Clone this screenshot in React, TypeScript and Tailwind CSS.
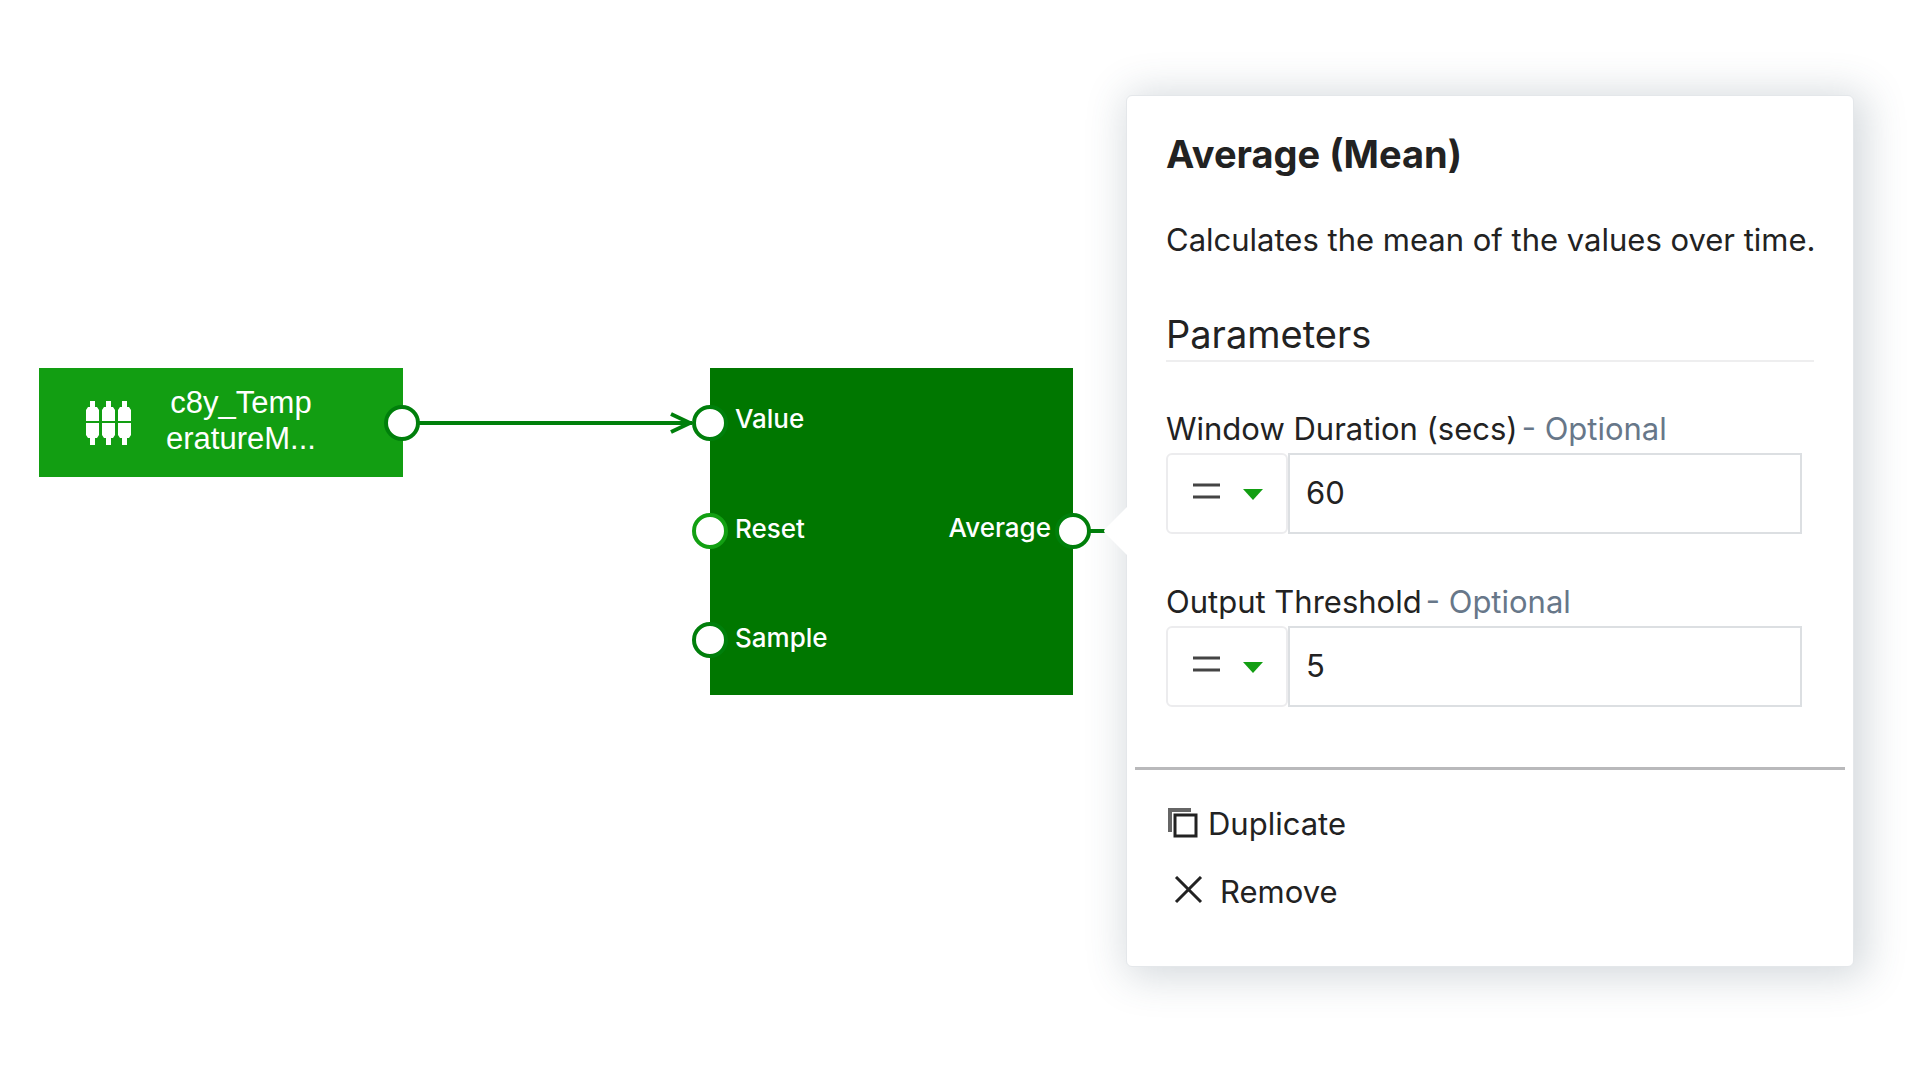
import React from 'react';

interface PortProps {
  className: string;
}

interface ParameterFieldProps {
  id: string;
  label: string;
  value: string;
}

const Port: React.FC<PortProps> = ({ className }) => (
  <span className={`absolute h-9 w-9 rounded-full border-4 bg-white ${className}`} />
);

const SensorIcon = () => (
  <svg className="h-12 w-12 shrink-0" viewBox="0 0 48 48" fill="white" aria-hidden="true">
    {[1, 17, 33].map((x) => (
      <g key={x}>
        <path d={`M${x + 4} 2h5v6h2l2 3v11H${x}V11l2-3h2z`} />
        <path d={`M${x} 24h13v12l-2 3h-2v7h-5v-7h-2l-2-3z`} />
      </g>
    ))}
  </svg>
);

const SourceNode = () => (
  <div className="absolute left-[39px] top-[368px] flex h-[109px] w-[364px] items-center bg-[#129e12] pl-[46px] text-white">
    <SensorIcon />
    <p className="ml-5 w-[176px] pb-1 text-center font-['Liberation_Sans',sans-serif] text-[31px] leading-9">
      c8y_Temp
      <br />
      eratureM...
    </p>
    <Port className="-right-[17px] top-[37px] border-[#007f0b]" />
  </div>
);

const AverageNode = () => (
  <div className="absolute left-[710px] top-[368px] flex h-[327px] w-[363px] items-center justify-between bg-[#007700] pl-[25px] pr-[22px] text-[26px] font-medium leading-8 text-white">
    <ul className="flex h-full flex-col justify-between pb-[41px] pt-[35px]">
      <li>Value</li>
      <li>Reset</li>
      <li>Sample</li>
    </ul>
    <span className="pb-2">Average</span>
    <Port className="-left-[18px] top-[37px] border-[#007f0b]" />
    <Port className="-left-[18px] top-[145px] border-[#12a012]" />
    <Port className="-left-[18px] top-[254px] border-[#007f0b]" />
    <Port className="-right-[18px] top-[145px] border-[#007f0b]" />
  </div>
);

const ParameterField: React.FC<ParameterFieldProps> = ({ id, label, value }) => (
  <div>
    <label htmlFor={id} className="block whitespace-nowrap text-[31px] leading-10">
      {label}
      <span className="ml-1 text-[#677789]">- Optional</span>
    </label>
    <div className="mt-1 flex h-[81px] pr-3">
      <div className="relative w-[122px] shrink-0">
        <select
          aria-label={`${label} operator`}
          className="h-full w-full appearance-none rounded-md border-2 border-[#ececee] bg-white text-transparent"
        >
          <option>=</option>
        </select>
        <svg className="pointer-events-none absolute inset-0 h-full w-full" viewBox="0 0 122 81" aria-hidden="true">
          <path d="M27 32h27M27 44h27" stroke="#444" strokeWidth="3" />
          <path d="M77 36h20L87 47z" fill="#129e12" />
        </svg>
      </div>
      <input id={id} type="text" defaultValue={value} className="min-w-0 flex-1 border-2 border-[#dcdfe2] px-4 text-[31px]" />
    </div>
  </div>
);

const BlockPopover = () => (
  <section className="absolute left-[1126px] top-[95px] w-[728px] rounded-md border border-[#e4e7ea] bg-white px-2 pb-[50px] pt-8 shadow-[6px_4px_40px_6px_rgba(60,80,100,0.22)]">
    {/* Arrow towards the output port */}
    <svg className="absolute -left-6 top-[411px] h-12 w-6" viewBox="0 0 24 48" aria-hidden="true">
      <path d="M24 0L2 22q-2 2 0 4L24 48z" fill="white" />
    </svg>
    <div className="px-[31px]">
      <h1 className="text-[38px] font-bold leading-[52px]">Average (Mean)</h1>
      <p className="mt-[34px] whitespace-nowrap text-[31px] leading-[52px]">Calculates the mean of the values over time.</p>
      <h2 className="mt-[34px] border-b-2 border-[#eeeeef] pt-2 text-[38px] leading-[52px]">Parameters</h2>
      <div className="mt-[47px] flex flex-col gap-12">
        <ParameterField id="window-duration" label="Window Duration (secs)" value="60" />
        <ParameterField id="output-threshold" label="Output Threshold" value="5" />
      </div>
    </div>
    <hr className="mt-[60px] border-t-[3px] border-[#b9b9bb]" />
    <div className="mt-[30px] flex flex-col items-start gap-5 px-[31px]">
      <button type="button" className="flex items-center gap-[10px] text-[31px] leading-12">
        <svg className="h-8 w-8" viewBox="0 3 32 32" fill="none" stroke="#222" strokeWidth="3" aria-hidden="true">
          <path d="M4 27V5h21" stroke="#666" strokeWidth="4" />
          <path d="M9 10h21v21H9z" />
        </svg>
        Duplicate
      </button>
      <button type="button" className="flex items-center gap-[14px] pl-2 text-[31px] leading-12">
        <svg className="h-8 w-8" viewBox="0 2 32 32" fill="none" stroke="#222" strokeWidth="3" aria-hidden="true">
          <path d="M2 3l25 25M27 3L2 28" />
        </svg>
        Remove
      </button>
    </div>
  </section>
);

export default function App() {
  return (
    <main className="relative min-h-screen overflow-hidden bg-white font-['Inter',sans-serif] text-[#222]">
      <SourceNode />
      <AverageNode />
      {/* Wires */}
      <svg className="absolute left-[418px] top-[410px] h-[26px] w-[276px]" viewBox="0 0 276 26" fill="none" stroke="#007f0b" strokeWidth="4" aria-hidden="true">
        <path d="M0 13h274M253 4l19 9-19 9" />
      </svg>
      <svg className="absolute left-[1090px] top-[527px] h-2 w-5" viewBox="0 0 20 8" stroke="#007f0b" strokeWidth="4" aria-hidden="true">
        <path d="M0 4h20" />
      </svg>
      <BlockPopover />
    </main>
  );
}
